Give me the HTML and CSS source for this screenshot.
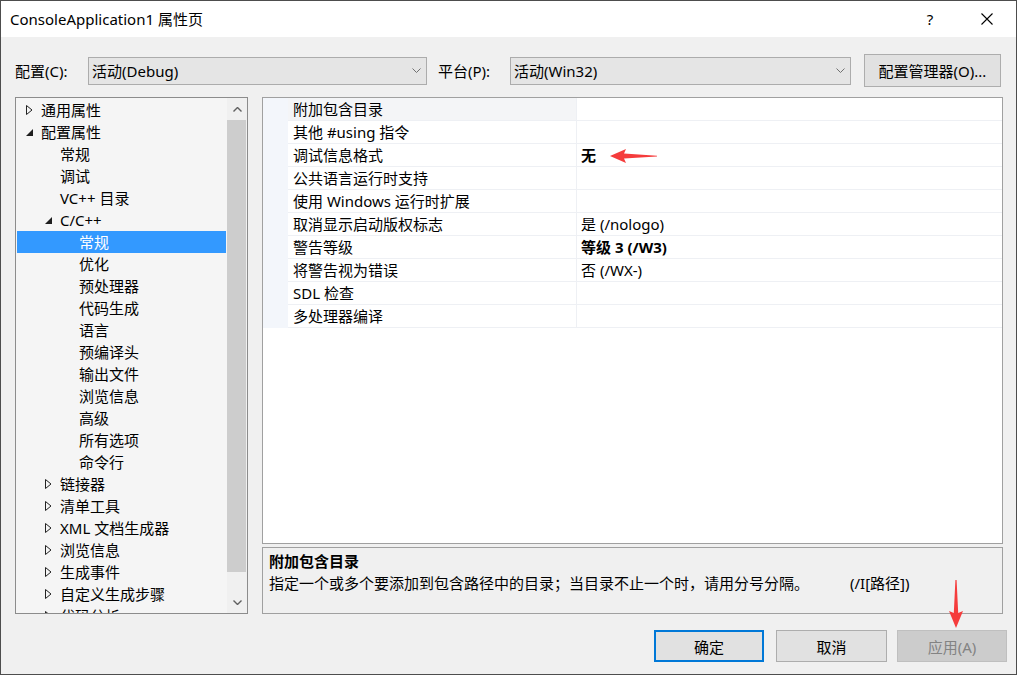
FILE: index.html
```html
<!DOCTYPE html>
<html lang="zh-CN">
<head>
    <meta charset="UTF-8">
    <title>ConsoleApplication1 属性页</title>
    <link rel="stylesheet" href="styles.css">
</head>
<body>
    <div class="window">
        <div class="titlebar">
            <span class="title">ConsoleApplication1 属性页</span>
            <div class="caption">
                <span class="cap-help">?</span>
                <span class="cap-close">
                    <svg width="12" height="12" viewBox="0 0 12 12"><path d="M0.5 0.5 L11.5 11.5 M11.5 0.5 L0.5 11.5" stroke="#000" stroke-width="1.1" fill="none"/></svg>
                </span>
            </div>
        </div>

        <div class="content">
            <div class="config-row">
                <span class="cfg-label">配置(C):</span>
                <div class="combo combo-config">
                    <span class="combo-text">活动(Debug)</span>
                    <svg class="chevron" width="9" height="5" viewBox="0 0 9 5"><path d="M0.5 0.5 L4.5 4.5 L8.5 0.5" stroke="#707070" fill="none"/></svg>
                </div>
                <span class="cfg-label label-platform">平台(P):</span>
                <div class="combo combo-platform">
                    <span class="combo-text">活动(Win32)</span>
                    <svg class="chevron" width="9" height="5" viewBox="0 0 9 5"><path d="M0.5 0.5 L4.5 4.5 L8.5 0.5" stroke="#707070" fill="none"/></svg>
                </div>
                <button class="btn btn-manager">配置管理器(O)...</button>
            </div>

            <div class="main">
                <div class="tree">
                    <ul class="tree-list">
                        <li class="tree-item lv0"><span class="twisty"><svg width="7" height="10" viewBox="0 0 7 10"><path d="M0.5 0.5 L6 5 L0.5 9.5 Z" stroke="#222" fill="none"/></svg></span>通用属性</li>
                        <li class="tree-item lv0"><span class="twisty"><svg width="7" height="7" viewBox="0 0 7 7"><path d="M7 0 L7 7 L0 7 Z" fill="#1e1e1e"/></svg></span>配置属性</li>
                        <li class="tree-item lv1"><span class="twisty"></span>常规</li>
                        <li class="tree-item lv1"><span class="twisty"></span>调试</li>
                        <li class="tree-item lv1"><span class="twisty"></span>VC++ 目录</li>
                        <li class="tree-item lv1"><span class="twisty"><svg width="7" height="7" viewBox="0 0 7 7"><path d="M7 0 L7 7 L0 7 Z" fill="#1e1e1e"/></svg></span>C/C++</li>
                        <li class="tree-item lv2 selected"><span class="twisty"></span>常规</li>
                        <li class="tree-item lv2"><span class="twisty"></span>优化</li>
                        <li class="tree-item lv2"><span class="twisty"></span>预处理器</li>
                        <li class="tree-item lv2"><span class="twisty"></span>代码生成</li>
                        <li class="tree-item lv2"><span class="twisty"></span>语言</li>
                        <li class="tree-item lv2"><span class="twisty"></span>预编译头</li>
                        <li class="tree-item lv2"><span class="twisty"></span>输出文件</li>
                        <li class="tree-item lv2"><span class="twisty"></span>浏览信息</li>
                        <li class="tree-item lv2"><span class="twisty"></span>高级</li>
                        <li class="tree-item lv2"><span class="twisty"></span>所有选项</li>
                        <li class="tree-item lv2"><span class="twisty"></span>命令行</li>
                        <li class="tree-item lv1"><span class="twisty"><svg width="7" height="10" viewBox="0 0 7 10"><path d="M0.5 0.5 L6 5 L0.5 9.5 Z" stroke="#222" fill="none"/></svg></span>链接器</li>
                        <li class="tree-item lv1"><span class="twisty"><svg width="7" height="10" viewBox="0 0 7 10"><path d="M0.5 0.5 L6 5 L0.5 9.5 Z" stroke="#222" fill="none"/></svg></span>清单工具</li>
                        <li class="tree-item lv1"><span class="twisty"><svg width="7" height="10" viewBox="0 0 7 10"><path d="M0.5 0.5 L6 5 L0.5 9.5 Z" stroke="#222" fill="none"/></svg></span>XML 文档生成器</li>
                        <li class="tree-item lv1"><span class="twisty"><svg width="7" height="10" viewBox="0 0 7 10"><path d="M0.5 0.5 L6 5 L0.5 9.5 Z" stroke="#222" fill="none"/></svg></span>浏览信息</li>
                        <li class="tree-item lv1"><span class="twisty"><svg width="7" height="10" viewBox="0 0 7 10"><path d="M0.5 0.5 L6 5 L0.5 9.5 Z" stroke="#222" fill="none"/></svg></span>生成事件</li>
                        <li class="tree-item lv1"><span class="twisty"><svg width="7" height="10" viewBox="0 0 7 10"><path d="M0.5 0.5 L6 5 L0.5 9.5 Z" stroke="#222" fill="none"/></svg></span>自定义生成步骤</li>
                        <li class="tree-item lv1"><span class="twisty"><svg width="7" height="10" viewBox="0 0 7 10"><path d="M0.5 0.5 L6 5 L0.5 9.5 Z" stroke="#222" fill="none"/></svg></span>代码分析</li>
                    </ul>
                    <div class="scrollbar">
                        <div class="sb-arrow"><svg width="9" height="5" viewBox="0 0 9 5"><path d="M0.5 4.5 L4.5 0.5 L8.5 4.5" stroke="#606060" stroke-width="1.4" fill="none"/></svg></div>
                        <div class="sb-track"><div class="sb-thumb"></div></div>
                        <div class="sb-arrow"><svg width="9" height="5" viewBox="0 0 9 5"><path d="M0.5 0.5 L4.5 4.5 L8.5 0.5" stroke="#606060" stroke-width="1.4" fill="none"/></svg></div>
                    </div>
                </div>

                <div class="right">
                    <div class="grid">
                        <div class="row current"><span class="gutter"></span><span class="name">附加包含目录</span><span class="value"></span></div>
                        <div class="row"><span class="gutter"></span><span class="name">其他 #using 指令</span><span class="value"></span></div>
                        <div class="row"><span class="gutter"></span><span class="name">调试信息格式</span><span class="value bold">无</span></div>
                        <div class="row"><span class="gutter"></span><span class="name">公共语言运行时支持</span><span class="value"></span></div>
                        <div class="row"><span class="gutter"></span><span class="name">使用 Windows 运行时扩展</span><span class="value"></span></div>
                        <div class="row"><span class="gutter"></span><span class="name">取消显示启动版权标志</span><span class="value">是 (/nologo)</span></div>
                        <div class="row"><span class="gutter"></span><span class="name">警告等级</span><span class="value bold">等级 3 (/W3)</span></div>
                        <div class="row"><span class="gutter"></span><span class="name">将警告视为错误</span><span class="value">否 (/WX-)</span></div>
                        <div class="row"><span class="gutter"></span><span class="name">SDL 检查</span><span class="value"></span></div>
                        <div class="row"><span class="gutter"></span><span class="name">多处理器编译</span><span class="value"></span></div>
                    </div>
                    <div class="desc">
                        <div class="desc-title">附加包含目录</div>
                        <div class="desc-line"><span class="desc-text">指定一个或多个要添加到包含路径中的目录；当目录不止一个时，请用分号分隔。</span><span>(/I[路径])</span></div>
                    </div>
                </div>
            </div>

            <div class="actions">
                <button class="btn btn-ok">确定</button>
                <button class="btn btn-cancel">取消</button>
                <button class="btn btn-apply" disabled>应用(A)</button>
            </div>
        </div>

        <!-- annotation arrows -->
        <svg class="mark mark-left" width="48" height="15" viewBox="0 0 48 15"><path d="M0 7 L16 0 L14 4.6 L47 6.8 L47 7.6 L14 9.6 L16 14 Z" fill="#f53c3c"/></svg>
        <svg class="mark mark-down" width="16" height="49" viewBox="0 0 16 49"><path d="M7.4 0 L8.6 0 L10.2 33 L15 31 L8 48 L1 31 L5.8 33 Z" fill="#f53c3c"/></svg>
    </div>
</body>
</html>
```

FILE: styles.css
```css
html, body {
    margin: 0;
    padding: 0;
}

body {
    font-family: "Noto Sans", "Noto Sans CJK SC", sans-serif;
    font-size: 15px;
    color: #000;
}

.window {
    position: relative;
    width: 1017px;
    height: 675px;
    box-sizing: border-box;
    border: 1px solid #4d4d4d;
    background: #f0f0f0;
    display: flex;
    flex-direction: column;
}

.titlebar {
    height: 36px;
    background: #fff;
    display: flex;
    align-items: center;
    padding-left: 9px;
}

.title {
    flex: 1;
    line-height: 20px;
}

.caption {
    display: flex;
    align-items: center;
    height: 100%;
}

.cap-help {
    width: 46px;
    text-align: center;
    line-height: 20px;
}

.cap-close {
    width: 58px;
    margin-left: 5px;
    display: flex;
    justify-content: center;
}

.content {
    flex: 1;
    padding: 17px 0 0 14px;
    display: flex;
    flex-direction: column;
}

/* config row */
.config-row {
    display: flex;
    align-items: center;
    height: 33px;
}

.cfg-label {
    width: 73px;
    line-height: 20px;
}

.label-platform {
    width: 72px;
    margin-left: 11px;
}

.combo {
    height: 28px;
    box-sizing: border-box;
    border: 1px solid #acacac;
    background: #e5e5e5;
    display: flex;
    align-items: center;
    padding: 0 5px 0 3px;
}

.combo-text {
    flex: 1;
    line-height: 20px;
}

.combo-config {
    width: 339px;
}

.combo-platform {
    width: 341px;
}

.btn {
    font: inherit;
    color: #000;
    background: #e1e1e1;
    border: 1px solid #adadad;
    padding: 0;
    box-sizing: border-box;
    height: 32px;
}

.btn-manager {
    margin-left: 13px;
    width: 137px;
    height: 33px;
}

/* main area */
.main {
    display: flex;
    gap: 14px;
    margin-top: 10px;
    height: 517px;
}

.tree {
    width: 233px;
    box-sizing: border-box;
    border: 1px solid #8c8c8c;
    background: #f5f5f5;
    display: flex;
}

.tree-list {
    flex: 1;
    margin: 0;
    padding: 1px 1px 0;
    list-style: none;
    overflow: hidden;
}

.tree-item {
    height: 22px;
    display: flex;
    align-items: center;
    white-space: nowrap;
    line-height: 20px;
}

.tree-item.lv0 { padding-left: 9px; }
.tree-item.lv1 { padding-left: 28px; }
.tree-item.lv2 { padding-left: 47px; }

.tree-item.selected {
    background: #3399ff;
    color: #fff;
}

.twisty {
    width: 15px;
    flex: none;
    display: flex;
    align-items: center;
}

.scrollbar {
    width: 20px;
    background: #f0f0f0;
    display: flex;
    flex-direction: column;
}

.sb-arrow {
    height: 22px;
    display: flex;
    align-items: center;
    justify-content: center;
}

.sb-track {
    flex: 1;
    padding-right: 1px;
}

.sb-thumb {
    height: 452px;
    background: #cdcdcd;
}

.right {
    width: 741px;
    display: flex;
    flex-direction: column;
    gap: 3px;
}

.grid {
    height: 447px;
    box-sizing: border-box;
    border: 1px solid #a0a0a0;
    background: #fff;
}

.row {
    display: grid;
    grid-template-columns: 25px 289px 1fr;
    height: 23px;
}

.gutter {
    background: #f3f6fb;
}

.name, .value {
    border-bottom: 1px solid #eef0f4;
    line-height: 22px;
    white-space: nowrap;
}

.name {
    padding-left: 5px;
    border-right: 1px solid #eef0f4;
}

.value {
    padding-left: 4px;
}

.row.current .name {
    background: #f4f5f7;
}

.bold {
    font-weight: 700;
}

.desc {
    height: 67px;
    box-sizing: border-box;
    border: 1px solid #a0a0a0;
    padding: 2px 6px;
}

.desc-title {
    font-weight: 700;
    line-height: 22px;
}

.desc-line {
    line-height: 22px;
    white-space: nowrap;
}

.desc-text {
    display: inline-block;
    width: 581px;
}

/* bottom buttons */
.actions {
    display: flex;
    justify-content: flex-end;
    margin-top: 16px;
    padding-right: 9px;
}

.btn-ok {
    width: 110px;
    border: 2px solid #0078d7;
}

.btn-cancel {
    width: 111px;
    margin-left: 12px;
}

.btn-apply {
    width: 110px;
    margin-left: 10px;
    background: #cccccc;
    border-color: #bfbfbf;
    color: #838383;
}

.mark {
    position: absolute;
}

.mark-left {
    left: 609px;
    top: 148px;
}

.mark-down {
    left: 947px;
    top: 579px;
}
```
